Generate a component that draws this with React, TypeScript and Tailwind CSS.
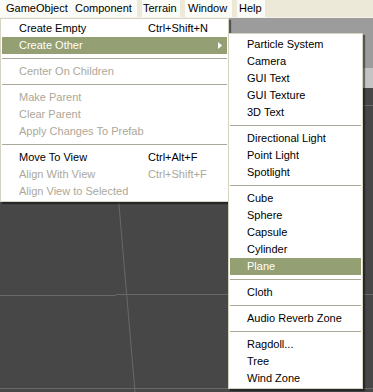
import React from "react";

type Item =
  | { sep: true }
  | { label: string; shortcut?: string; disabled?: boolean; active?: boolean; sub?: boolean };

const mainItems: Item[] = [
  { label: "Create Empty", shortcut: "Ctrl+Shift+N" },
  { label: "Create Other", active: true, sub: true },
  { sep: true },
  { label: "Center On Children", disabled: true },
  { sep: true },
  { label: "Make Parent", disabled: true },
  { label: "Clear Parent", disabled: true },
  { label: "Apply Changes To Prefab", disabled: true },
  { sep: true },
  { label: "Move To View", shortcut: "Ctrl+Alt+F" },
  { label: "Align With View", shortcut: "Ctrl+Shift+F", disabled: true },
  { label: "Align View to Selected", disabled: true },
];

const subItems: Item[] = [
  { label: "Particle System" },
  { label: "Camera" },
  { label: "GUI Text" },
  { label: "GUI Texture" },
  { label: "3D Text" },
  { sep: true },
  { label: "Directional Light" },
  { label: "Point Light" },
  { label: "Spotlight" },
  { sep: true },
  { label: "Cube" },
  { label: "Sphere" },
  { label: "Capsule" },
  { label: "Cylinder" },
  { label: "Plane", active: true },
  { sep: true },
  { label: "Cloth" },
  { sep: true },
  { label: "Audio Reverb Zone" },
  { sep: true },
  { label: "Ragdoll..." },
  { label: "Tree" },
  { label: "Wind Zone" },
];

const MenuRow = ({ item, labelWidth }: { item: Item; labelWidth?: string }) => {
  if ("sep" in item) {
    return (
      <div className="h-[9px] pt-[4px]">
        <div className="h-px bg-[#aca899]" />
      </div>
    );
  }
  const color = item.active ? "text-white" : item.disabled ? "text-[#aca899]" : "text-black";
  return (
    <div
      className={`relative flex h-[17px] items-center leading-none ${color} ${
        item.active ? "bg-[#94a074]" : ""
      }`}
    >
      <span className={`pl-[17px] whitespace-nowrap ${labelWidth ?? ""}`}>{item.label}</span>
      {item.shortcut && <span className="whitespace-nowrap">{item.shortcut}</span>}
      {item.sub && (
        <svg className="absolute right-[5px] top-[5px]" width="4" height="7" viewBox="0 0 4 7">
          <path d="M0 0 L4 3.5 L0 7 Z" fill="#ffffff" />
        </svg>
      )}
    </div>
  );
};

const MenuBarItem = ({ label, className }: { label: string; className: string }) => (
  <div className={`flex h-full items-center bg-[#fbfbf7] leading-none ${className}`}>{label}</div>
);

export default function App() {
  return (
    <div
      className="relative h-[392px] w-[373px] overflow-hidden bg-[#474747] text-[11px] text-black"
      style={{ fontFamily: '"Liberation Sans", Arial, sans-serif' }}
    >
      {/* menu bar */}
      <div className="flex h-[18px] border-b border-[#f4f3ec] bg-[#ece9d8]">
        <MenuBarItem label="GameObject" className="w-[69px] pl-[6px]" />
        <MenuBarItem label="Component" className="w-[68px] pl-[6px]" />
        <div className="w-[5px]" />
        <MenuBarItem label="Terrain" className="w-[38px] pl-[1px]" />
        <div className="w-[5px]" />
        <MenuBarItem label="Window" className="w-[47px] pl-[3px]" />
        <div className="w-[5px]" />
        <MenuBarItem label="Help" className="w-[28px] pl-[2px]" />
      </div>

      {/* editor background */}
      <div className="flex h-[374px] flex-col">
        <div className="h-[50px] bg-[#9c9c9c]" />
        <div className="h-[20px] bg-[#c4c4c4]" />
        <div className="flex-1">
          <svg width="373" height="304" viewBox="0 0 373 304" className="block">
            <line x1="109" y1="0" x2="135" y2="304" stroke="#686868" strokeWidth="1" />
            <line x1="0" y1="207.5" x2="116" y2="207.5" stroke="#686868" strokeWidth="1" />
            <line x1="116" y1="206.5" x2="373" y2="206.5" stroke="#686868" strokeWidth="1" />
            <line x1="0" y1="300.5" x2="373" y2="300.5" stroke="#686868" strokeWidth="1" />
            <line x1="0" y1="17.5" x2="373" y2="17.5" stroke="#686868" strokeWidth="1" />
          </svg>
        </div>
      </div>

      {/* GameObject menu */}
      <div className="absolute left-0 top-[18px] w-[229px] border border-[#d6d3c2] bg-white px-px pb-px pt-px shadow-[2px_2px_1px_rgba(0,0,0,0.45)]">
        {mainItems.map((item, i) => (
          <MenuRow key={i} item={item} labelWidth="w-[146px]" />
        ))}
      </div>

      {/* Create Other submenu */}
      <div className="absolute left-[228px] top-[33px] w-[135px] border border-[#d6d3c2] bg-white px-px pb-px pt-[2px] shadow-[2px_2px_1px_rgba(0,0,0,0.45)]">
        {subItems.map((item, i) => (
          <MenuRow key={i} item={item} />
        ))}
      </div>
    </div>
  );
}
